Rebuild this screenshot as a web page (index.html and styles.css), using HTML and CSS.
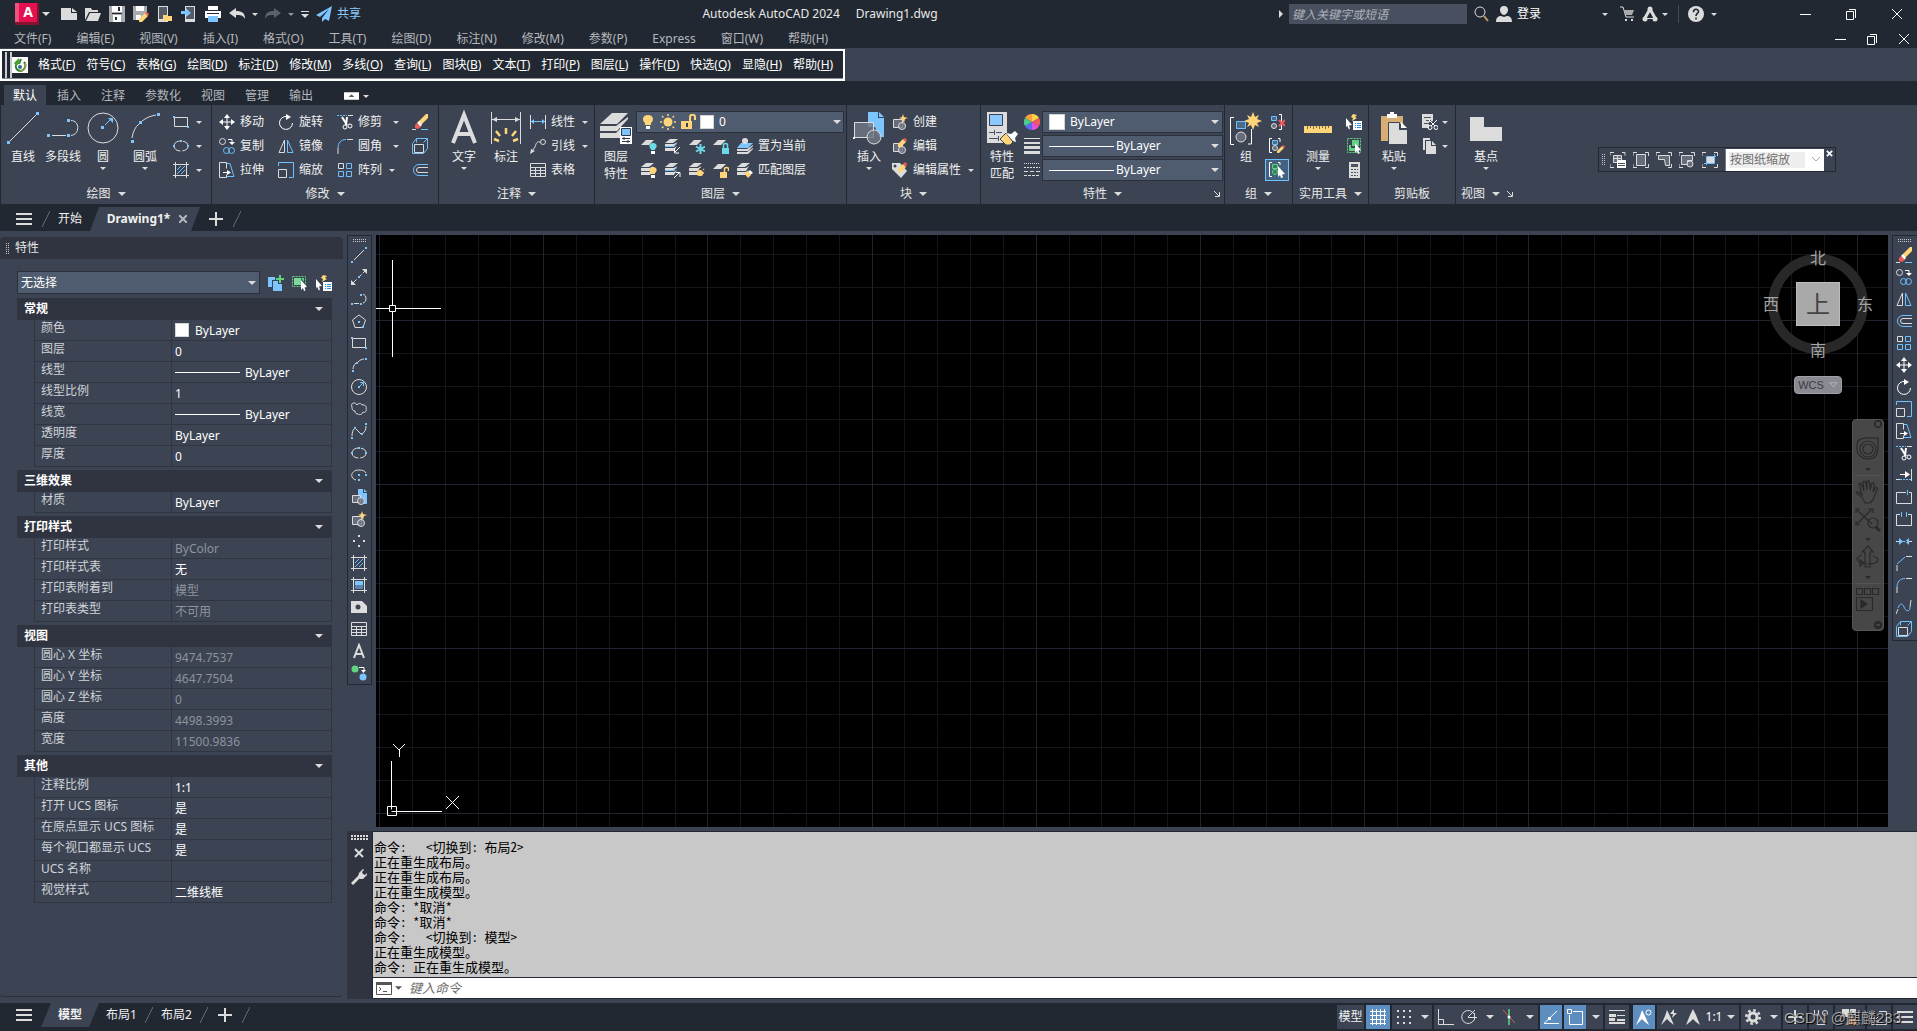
FILE: index.html
```html
<!DOCTYPE html>
<html lang="zh-CN">
<head>
<meta charset="utf-8">
<title>Autodesk AutoCAD 2024 - Drawing1.dwg</title>
<link rel="stylesheet" href="styles.css">
</head>
<body>

<svg class="sprite" aria-hidden="true">
  <symbol id="caret" viewBox="0 0 8 4"><path class="fg" d="M0 0h8L4 4z"/></symbol>
  <symbol id="new" viewBox="0 0 16 16"><path class="fg" d="M0 2h10v5h6v7H0z"/><path class="fg" d="M11 2l5 4h-5z"/></symbol>
  <symbol id="open" viewBox="0 0 16 16"><path class="fg" d="M0 2h6l1 2h6v2H4L0 14z"/><path class="fg" d="M5 7h11l-3 8H1z"/></symbol>
  <symbol id="save" viewBox="0 0 16 16"><path fill="#a9abae" d="M0 0h16v16H0z"/><path class="fw" d="M3 0h10v6H3zM4 9h8v7H4z"/><path fill="#222831" d="M3 7h10v1H3zM9 1h2v4H9zM6 11h2v3H6z"/></symbol>
  <symbol id="saveas" viewBox="0 0 16 16"><path fill="#a9abae" d="M0 0h14v11H0zM0 11h5v3H0z"/><path class="fw" d="M3 0h8v5H3z"/><path class="fw" d="M3 9h5v5H3z"/><path class="fy" d="M6 13l6-6 3 3-6 6H6z"/><path class="fr" d="M12 7l2-1 2 2-1 2z"/></symbol>
  <symbol id="webopen" viewBox="0 0 16 16"><path class="fg" d="M1 0h10v16H1z"/><path fill="#555b66" d="M2 1h8v12H2z"/><path class="fy" d="M6 9h4l1 1h4v5H6z"/></symbol>
  <symbol id="websave" viewBox="0 0 16 16"><path class="fg" d="M4 0h10v16H4z"/><path fill="#555b66" d="M5 1h8v12H5z"/><path class="fb" d="M0 5h5V2l5 5-5 4V8H0z"/></symbol>
  <symbol id="print" viewBox="0 0 16 16"><path class="fw" d="M3 0h10v4H3zM0 5h16v7H0z"/><path class="fb" d="M3 10h10v6H3z"/><path fill="#222831" d="M2 7h12v1H2z"/></symbol>
  <symbol id="undo" viewBox="0 0 16 16"><path class="fg" d="M0 7l7-5v3c6 0 9 2 9 8-2-4-5-4-9-4v3z"/></symbol>
  <symbol id="redo" viewBox="0 0 16 16"><path fill="#5c626c" d="M16 7L9 2v3c-6 0-9 2-9 8 2-4 5-4 9-4v3z"/></symbol>
  <symbol id="plane" viewBox="0 0 16 16"><path class="fb" d="M16 0L0 9l4 2 9-8-7 9v4l3-3 4 2z"/></symbol>
  <symbol id="mag" viewBox="0 0 16 16"><circle class="g" cx="7" cy="6" r="5"/><path stroke="#c99c63" stroke-width="2" d="M11 10l4 5"/></symbol>
  <symbol id="user" viewBox="0 0 16 16"><path class="fg" d="M8 0c3 0 4 2 4 4S10 9 8 9 4 6 4 4s1-4 4-4zM0 16c0-4 2-6 5-6l3 1 3-1c3 0 5 2 5 6z"/></symbol>
  <symbol id="cart" viewBox="0 0 16 16"><path class="g" d="M1 1h3l3 10h8"/><path fill="#a9abae" d="M5 4h10l-2 5H6z"/><path class="fg" d="M6 13h2v2H6zM12 13h2v2h-2z"/></symbol>
  <symbol id="adsk" viewBox="0 0 16 16"><path fill="none" stroke="#dcdcdc" stroke-width="3" d="M8 3L3 12M8 3l5 9"/><path class="g" d="M3 12.500h10"/><circle class="fg" cx="8" cy="3" r="2.500"/><circle class="fg" cx="3" cy="13" r="2.500"/><circle class="fg" cx="13" cy="13" r="2.500"/></symbol>
  <symbol id="help" viewBox="0 0 16 16"><circle class="fg" cx="8" cy="8" r="8"/><path fill="none" stroke="#222831" stroke-width="1.600" d="M5.500 6.200c0-4 5-3.500 5-.7C10.500 7.500 8 7.500 8 10M8 11.500v2"/></symbol>
  <symbol id="min" viewBox="0 0 12 12"><path class="w" d="M1 6.500h11"/></symbol>
  <symbol id="restore" viewBox="0 0 12 12"><path class="w" d="M1.500 3.500h7v8h-7zM4 1.500h6.500V10"/></symbol>
  <symbol id="close" viewBox="0 0 12 12"><path class="w" d="M1 1l10 10M11 1L1 11"/></symbol>
  <symbol id="bars" viewBox="0 0 16 14"><path class="g2" d="M0 2h16M0 7h16M0 12h16"/></symbol>
  <symbol id="plus" viewBox="0 0 14 14"><path class="g2" d="M7 0v14M0 7h14"/></symbol>

  <symbol id="move" viewBox="0 0 16 16"><path class="w" d="M8 2v12M2 8h12"/><path class="fw" d="M8 0l3 4H5zM8 16l-3-4h6zM0 8l4-3v6zM16 8l-4 3V5z"/></symbol>
  <symbol id="rotate" viewBox="0 0 16 16"><path class="w" d="M9 2.500a6.500 6.500 0 1 0 5.500 6.500"/><path class="fw" d="M8 0l5 3-5 3z"/></symbol>
  <symbol id="trim" viewBox="0 0 16 16"><path class="b" stroke-dasharray="2 1" d="M0 1.500h10"/><path class="g" d="M11 1.500h5"/><path class="w2" d="M5 3l5 8M10 3l-1 8"/><circle class="w" cx="8" cy="13" r="2"/><circle class="w" cx="13" cy="12" r="2"/></symbol>
  <symbol id="erase" viewBox="0 0 16 16"><path class="fy" d="M6 8l8-8h2v4l-7 7z"/><path class="fw" d="M5 9l2-2 3 4-2 2z"/><path class="fr" d="M5 9l4 4-3 2-3-1V11z"/><path class="g" d="M0 15.500h4"/><path class="b" d="M9 15.500h7"/></symbol>
  <symbol id="copy" viewBox="0 0 16 16"><circle class="g" cx="3.500" cy="3.500" r="3"/><path class="w" d="M9 1.500h4V5"/><path class="fw" d="M10 4h6l-3 3z"/><circle class="b" cx="7.500" cy="12.500" r="3"/><circle class="b" cx="12.500" cy="12.500" r="3"/></symbol>
  <symbol id="mirror" viewBox="0 0 16 16"><path class="g" d="M6.500 2v12.500H1z"/><path class="b" d="M9.500 2v12.500H15z"/></symbol>
  <symbol id="fillet" viewBox="0 0 16 16"><path class="b" d="M1 10C1 5 4 1.500 9 1.500"/><path class="g" d="M10 1.500h6M1 10v6"/></symbol>
  <symbol id="chamfer" viewBox="0 0 16 16"><path class="b" d="M1 9l8-7"/><path class="g" d="M10 1.500h6M1 10v6"/></symbol>
  <symbol id="box" viewBox="0 0 16 16"><path class="b" d="M.5 5.500l4-5h11v10l-4 5H.5zM4.500.5v4M15.500.5l-4 4"/><path class="g" d="M2.500 6.500h9v8h-9z"/></symbol>
  <symbol id="stretch" viewBox="0 0 16 16"><path class="g" d="M.5.5h7v6M.5.5v15h7v-3"/><path class="b" d="M8 1.500h3l4 13H8"/><path class="w" d="M4 10.500h7"/><path class="fw" d="M8 8l4 2.500L8 13z"/></symbol>
  <symbol id="scale" viewBox="0 0 16 16"><path class="b" d="M.5 4V.5h15v15H11"/><path class="g" d="M.5 7.500h8v8h-8z"/></symbol>
  <symbol id="array" viewBox="0 0 16 16"><path class="g" d="M1.500 1.500h5v5h-5z"/><path class="b" d="M9.500 1.500h5v5h-5zM1.500 9.500h5v5h-5zM9.500 9.500h5v5h-5z"/></symbol>
  <symbol id="offset" viewBox="0 0 16 16"><path class="b" d="M16 2.500H7a5.500 5.500 0 0 0 0 11h9"/><path class="g" d="M16 5.500H7a2.500 2.500 0 0 0 0 5h9"/></symbol>
  <symbol id="rect" viewBox="0 0 16 16"><path class="g" d="M1.500 3.500h13v9h-13z"/><path class="fb" d="M0 2h2v2H0zM14 12h2v2h-2z"/></symbol>
  <symbol id="ellipse" viewBox="0 0 16 16"><ellipse class="g" cx="8" cy="8" rx="7" ry="5" stroke-dasharray="8 2"/><path class="fb" d="M0 7h2v2H0zM14 7h2v2h-2zM7 2h2v2H7z"/></symbol>
  <symbol id="hatch" viewBox="0 0 16 16"><path class="g" d="M2.500 0v16M13.500 0v16M0 2.500h16M0 13.500h16"/><path class="b" d="M4 8l4-4M4 12l8-8M8 12l4-4"/></symbol>
  <symbol id="gradient" viewBox="0 0 16 16"><path class="fb" d="M4 4h8v4H4z"/><path fill="#5a84ad" d="M4 8h8v4H4z"/><path class="g" d="M2.500 0v16M13.500 0v16M0 2.500h16M0 13.500h16"/></symbol>
  <symbol id="line" viewBox="0 0 16 16"><path class="g" d="M3 13L13 3"/><path class="fb" d="M0 14h2v2H0zM14 0h2v2h-2z"/></symbol>
  <symbol id="xline" viewBox="0 0 16 16"><path class="g" stroke-dasharray="5 2" d="M2 14L14 2"/><path class="fg" d="M0 16v-5l5 5zM16 0v5l-5-5z"/><path class="fb" d="M7 7h2v2H7z"/></symbol>
  <symbol id="pline" viewBox="0 0 16 16"><path class="g" d="M3 12.500h5M12 3.500c4 0 4 8 0 8.500"/><path class="fb" d="M0 12h2v2H0zM9 12h2v2H9zM9 3h2v2H9z"/></symbol>
  <symbol id="polygon" viewBox="0 0 16 16"><path class="g" d="M8 2l6.500 5-2.500 7.500H4L1.500 7z"/><path class="fb" d="M7 8h2v2H7zM11 13h2v2h-2z"/></symbol>
  <symbol id="arc" viewBox="0 0 16 16"><path class="g" d="M2 12c0-2 1-4 3-6M7 5c2-2 4-3 6-3"/><path class="fb" d="M1 13h2v2H1zM5 5h2v2H5zM14 1h2v2h-2z"/></symbol>
  <symbol id="circle" viewBox="0 0 16 16"><circle class="g" cx="8" cy="8" r="7.500"/><path class="b" d="M8 8l4-4M9 3.500h3.500V7"/><path class="fb" d="M7 7h2v2H7z"/></symbol>
  <symbol id="cloud" viewBox="0 0 16 16"><path class="g" d="M1 6c-2-5 4-5 5-2 2-3 5-1 5 0 3-1 5 2 4 4 1 2-1 4-3 3-1 3-4 3-5 2-2 0-3-1-3-3-3 0-3-3-3-4z"/></symbol>
  <symbol id="spline" viewBox="0 0 16 16"><path class="g" d="M1 13c0-3 1-6 2-7M5 6l5 5M12 10c2-1 3-4 3-7"/><path class="fb" d="M0 14h2v2H0zM3 4h2v2H3zM10 10h2v2h-2zM14 0h2v2h-2z"/></symbol>
  <symbol id="earc" viewBox="0 0 16 16"><path class="g" d="M5 13C-2 11 0 3 8 3c4 0 6 1 7 3"/><path class="fb" d="M14 7h2v2h-2zM7 7h2v2H7zM7 12h2v2H7z"/></symbol>
  <symbol id="insert" viewBox="0 0 16 16"><path class="fb" d="M7 0h5v4h4v11h-4l-2-5H7z"/><path class="fb" d="M13 0l3 3h-3z"/><path class="gs" d="M1.500 6.500h8v7h-8z"/><circle class="gs" cx="10" cy="12" r="3.500"/></symbol>
  <symbol id="mkblock" viewBox="0 0 16 16"><path class="gs" d="M1.500 5.500h9v8h-9z"/><circle class="gs" cx="10" cy="12" r="3.500"/><path class="fy" d="M11 0l1 3 4 1-3 1-1 4-2-4-3-1 3-1z"/></symbol>
  <symbol id="edblock" viewBox="0 0 16 16"><path class="gs" d="M1.500 5.500h9v8h-9z"/><circle class="gs" cx="10" cy="12" r="3.500"/><path class="fy" d="M6 9V6l5-5 3 3-5 5z"/><path class="fr" d="M11 1l2-1 2 2-1 2z"/></symbol>
  <symbol id="attr" viewBox="0 0 16 16"><path class="fg" d="M0 1h8l7 8-6 7-9-9z"/><circle cx="3" cy="4" r="1.500" fill="#3c4453"/><path class="fy" d="M6 10V7l5-5 3 3-5 5z"/><path class="fr" d="M11 2l2-2 2 2-1 3z"/></symbol>
  <symbol id="points" viewBox="0 0 16 16"><path class="fg" d="M7 2h2v2H7zM2 7h2v2H2zM12 7h2v2h-2zM7 12h2v2H7z"/></symbol>
  <symbol id="region" viewBox="0 0 16 16"><path class="fg" d="M0 2h11l5 5v7H0z"/><circle cx="7" cy="8" r="2.500" fill="#3c4453"/></symbol>
  <symbol id="table" viewBox="0 0 16 16"><path class="g" d="M.5 1.500h15v13H.5zM0 5.500h16M0 8.500h16M0 11.500h16M5.500 5v9M10.500 5v9"/></symbol>
  <symbol id="addsel" viewBox="0 0 16 16"><circle cx="4" cy="4" r="3.500" fill="#5fd381"/><circle class="fb" cx="12" cy="12" r="3.500"/><path class="w" d="M8 2.500h5V6"/><path class="fw" d="M10 5h5l-2.500 3z"/></symbol>
  <symbol id="extend" viewBox="0 0 16 16"><path class="g" d="M15.500 2v12M0 12.500h4"/><path class="b" stroke-dasharray="2 1" d="M4 12.500h11"/><path class="w" d="M4 7.500h6"/><path class="fw" d="M9 4l5 3.500L9 11z"/></symbol>
  <symbol id="breakp" viewBox="0 0 16 16"><path class="g" d="M10 3.500H.5v11h15v-11H13"/><path class="b" d="M11.500 1v5"/></symbol>
  <symbol id="break" viewBox="0 0 16 16"><path class="g" d="M4 3.500H.5v11h15v-11H12"/><path class="b" d="M5.500 1v5M10.500 1v5"/></symbol>
  <symbol id="join" viewBox="0 0 16 16"><path class="g" d="M0 8.500h5M11 8.500h5"/><path class="fb" d="M3 5l4 3.500L3 12zM13 5L9 8.500l4 3.500zM5 8h6v1H5z"/></symbol>
  <symbol id="blend" viewBox="0 0 16 16"><path class="b" d="M2 9c2-6 5-4 6-1 2 5 6 5 6 0"/><path class="g" d="M0 15l2-5M15 1l-1 7"/></symbol>
  <symbol id="dimlin" viewBox="0 0 16 16"><path class="g" d="M.5 1v14M15.500 1v14"/><path class="b" d="M1 7.500h14"/><path class="fb" d="M1 7.500L4 5v5zM15 7.500L12 5v5z"/></symbol>
  <symbol id="leader" viewBox="0 0 16 16"><circle class="g" cx="13" cy="4" r="2.500"/><path class="g" d="M10 4C6 3 6 7 5 9l-3 4"/><path class="fg" d="M0 16l1-5 4 2z"/></symbol>

  <symbol id="sheet" viewBox="0 0 16 16"><path class="fg" d="M5 2h8L8 7H0z"/></symbol>
  <symbol id="sheets" viewBox="0 0 16 16"><path class="fg" d="M5 1h8L8 5H0zM0 6h9l3-2-3 5H0zM0 10h9l3-2-3 5H0z"/></symbol>
  <symbol id="lay-off" viewBox="0 0 16 16"><use href="#sheet"/><path fill="#6dd9e8" d="M12 5c5 0 4 5 2 6v1h-4v-1c-2-1-3-6 2-6z"/><path class="fw" d="M10 13h4v3h-4z"/></symbol>
  <symbol id="lay-iso" viewBox="0 0 16 16"><use href="#sheets"/><path class="b" d="M0 8.500h8l4-3"/><path class="w" d="M15 9l-5 5M9.500 10v5H14"/></symbol>
  <symbol id="lay-frz" viewBox="0 0 16 16"><use href="#sheet"/><path stroke="#6dd9e8" stroke-width="2" d="M11.500 6v10M7 8.500l9 5M7 13.500l9-5"/></symbol>
  <symbol id="lay-lock" viewBox="0 0 16 16"><use href="#sheet"/><path fill="#6dd9e8" d="M9 10h7v6H9z"/><path fill="none" stroke="#6dd9e8" stroke-width="1.500" d="M10.500 10V7c0-2 4-2 4 0v3"/></symbol>
  <symbol id="lay-cur" viewBox="0 0 16 16"><path class="fb" d="M4 5h12l-5 5H0z"/><path class="fg" d="M0 11h10l6-4v1l-5 5H0zM0 14h10l6-4v1l-5 5H0z"/><circle class="fg" cx="8" cy="3" r="3"/></symbol>
  <symbol id="lay-on" viewBox="0 0 16 16"><use href="#sheets"/><path class="fy" d="M12 5c5 0 4 5 2 6v1h-4v-1c-2-1-3-6 2-6z"/><path class="fw" d="M10 13h4v3h-4z"/></symbol>
  <symbol id="lay-uniso" viewBox="0 0 16 16"><use href="#sheets"/><path class="b" d="M0 8.500h8l4-3"/><path class="w" d="M9 16l5-5M11 10.500h4V15"/></symbol>
  <symbol id="lay-thaw" viewBox="0 0 16 16"><use href="#sheets"/><circle class="fy" cx="11" cy="11" r="3"/><path stroke="#ffd57a" stroke-dasharray="1 3" stroke-width="1.500" d="M11 5v11M6 11h10M7 7l8 8M15 7l-8 8"/></symbol>
  <symbol id="lay-unlock" viewBox="0 0 16 16"><use href="#sheet"/><path class="fy" d="M7 10h7v6H7z"/><path fill="none" stroke="#ffd57a" stroke-width="1.500" d="M11.500 10V7c0-2 4-2 4 0v2"/></symbol>
  <symbol id="lay-match" viewBox="0 0 16 16"><use href="#sheets"/><path class="fw" d="M13 8l3 3-3 2-2-3z"/><path class="fy" d="M7 11l4-2 3 4-3 3z"/></symbol>
  <symbol id="bulb" viewBox="0 0 16 16"><path class="fy" d="M8 1c6 0 6 6 3 8v2H5V9C2 7 2 1 8 1z"/><path class="fw" d="M6 12h4v3H6z"/></symbol>
  <symbol id="sun" viewBox="0 0 16 16"><circle class="fy" cx="8" cy="8" r="4.500"/><path stroke="#ffd57a" stroke-width="1.500" stroke-dasharray="2 12" d="M8 0v16M0 8h16"/><path stroke="#ffd57a" stroke-width="1.500" stroke-dasharray="2 13" d="M2 2l12 12M14 2L2 14"/></symbol>
  <symbol id="unlock" viewBox="0 0 16 16"><path class="fy" d="M1 7h11v8H1z"/><path fill="none" stroke="#ffd57a" stroke-width="2" d="M10 7V3c0-3 5-3 5 0v3"/><path fill="#3c4453" d="M6 9h2v4H6z"/></symbol>
  <symbol id="wheel" viewBox="0 0 16 16"><path fill="#ff9d3c" d="M8 8V0a8 8 0 0 0-7 4z"/><path fill="#ffd24a" d="M8 8V0a8 8 0 0 1 7 4z"/><path fill="#f25b5b" d="M8 8l7-4a8 8 0 0 1 0 8z"/><path fill="#e94bd2" d="M8 8l7 4a8 8 0 0 1-7 4z"/><path fill="#5a6cf0" d="M8 8v8a8 8 0 0 1-7-4z"/><path fill="#4fc98a" d="M8 8l-7 4a8 8 0 0 1 0-8z"/></symbol>
  <symbol id="lweight" viewBox="0 0 16 16"><path class="fg" d="M0 0h16v1H0zM0 4h16v2H0zM0 8h16v3H0zM0 13h16v3H0z"/></symbol>
  <symbol id="ltype" viewBox="0 0 16 16"><path class="g" stroke-dasharray="1 1" d="M0 1.500h16"/><path class="g" stroke-dasharray="2 1" d="M0 5.500h16"/><path class="g" stroke-dasharray="4 2" d="M0 9.500h16"/><path class="g" stroke-dasharray="3 1" d="M0 13.500h16"/></symbol>
  <symbol id="ungroup" viewBox="0 0 16 16"><path class="w" d="M10 .5h2.500v15H10"/><path class="bs" d="M2.500 2.500h5v4h-5z"/><circle class="gs" cx="5" cy="12" r="2.500"/><path stroke="#f05a5a" stroke-width="2" d="M10 6l6 6M16 6l-6 6"/></symbol>
  <symbol id="grpedit" viewBox="0 0 16 16"><path class="w" d="M3 .5H.5v14H3M9 .5h2V4"/><path class="bs" d="M3.500 2.500h5v4h-5z"/><circle class="gs" cx="6" cy="10" r="2.500"/><path class="fy" d="M8 13l5-5 2 2-5 5H8z"/><path class="fr" d="M13 8l2-1 1 2-1 1z"/></symbol>
  <symbol id="grpsel" viewBox="0 0 16 16"><path class="w" d="M3 .5H.5v14H3M9 .5h2V3"/><path fill="#3d7a5a" stroke="#5fd381" d="M3.500 2.500h5v4h-5z"/><circle cx="6" cy="10" r="2.500" fill="#3d7a5a" stroke="#5fd381"/><path class="fw" d="M9 4l7 8-3 .5 1 3-2 .5-1-3-2 2z"/></symbol>
  <symbol id="qselect" viewBox="0 0 16 16"><path class="fw" d="M0 4l6 7-3 .5 1 3-1 1-2-4-1 2z"/><path class="fy" d="M7 0l4 1-2 2 2 1-5 3 1-3-2-1z"/><path class="fw" d="M7 7h9v9H7z"/><path stroke="#2d8de0" d="M9 9.500h1M11 9.500h4M9 11.500h1M11 11.500h4M9 13.500h1M11 13.500h4"/></symbol>
  <symbol id="selall" viewBox="0 0 16 16"><path fill="none" stroke="#5fd381" stroke-dasharray="2 1" d="M.5 1.500h13v10H.5z"/><path fill="#7fd89b" d="M2 3h7v7H2z"/><path fill="#5fd381" d="M9 3h3v4z"/><path class="fw" d="M9 5l6 7-2.500.5 1 3L12 16l-1-3-2 2z"/></symbol>
  <symbol id="selsim" viewBox="0 0 16 16"><path fill="none" stroke="#5fd381" stroke-dasharray="2 1" d="M1.500.5h13v14h-13z"/><path fill="#5fd381" d="M6 2h7v6H6zM3 7h2v3h5v3H3z"/><path class="fw" d="M9 5l6 7-2.500.5 1 3L12 16l-1-3-2 2z"/></symbol>
  <symbol id="calc" viewBox="0 0 16 16"><path class="fg" d="M3 0h11v16H3z"/><path fill="#4b5261" d="M5 2h7v3H5zM5 7h2v1H5zM8 7h2v1H8zM11 7h1v1h-1zM5 10h2v1H5zM8 10h2v1H8zM11 10h1v1h-1zM5 13h2v1H5zM8 13h2v1H8zM11 13h1v1h-1z"/></symbol>
  <symbol id="cut" viewBox="0 0 16 16"><path class="fg" d="M0 0h11v7l-4 1v6H0z"/><path stroke="#4b5261" d="M2 3.500h7M4 6.500h5M2 9.500h5"/><path class="w" d="M6 5l7 7M15 6l-6 6"/><circle class="w" cx="8" cy="13.500" r="2"/><circle class="w" cx="14" cy="13.500" r="2"/></symbol>
  <symbol id="copyclip" viewBox="0 0 16 16"><path class="fg" d="M1 0h7v2H3v10H1z"/><path class="fg" d="M4 3h5v5h5v8H4z"/><path class="fg" d="M10 3l4 4h-4z"/></symbol>
  <symbol id="addobj" viewBox="0 0 16 16"><path class="fb" d="M0 2h7v3H4v7H0z"/><path class="fb" d="M5 6h9v10H5z"/><path stroke="#3c4453" stroke-width="4" d="M12 0v9M8 4h8"/><path stroke="#5fd381" stroke-width="2" d="M12 0v8M8 4h8"/></symbol>
  <symbol id="vp-dlg" viewBox="0 0 16 16"><path class="g" d="M0 3.500V.5h4M12 .5h3v3M0 12v3.500h4"/><path class="gs" d="M3.500 3.500h8v7h-8zM3 6.500h9M7.500 3v6"/><path class="fw" d="M7 8h9v8H7z"/><path stroke="#4b5261" d="M8 11.500h7M8 13.500h7"/></symbol>
  <symbol id="vp-one" viewBox="0 0 16 16"><path class="g" d="M0 4V.5h4M12 .5h3.500V4M0 12v3.500h4M12 15.500h3.500V12"/><path class="gs" d="M3.500 2.500h9v11h-9z"/></symbol>
  <symbol id="vp-poly" viewBox="0 0 16 16"><path class="g" d="M0 4V.5h4M12 .5h3.500V4M12 15.500h3.500V12"/><path class="gs" d="M2.500 3.500h11v10h-4l-1-6h-6z"/></symbol>
  <symbol id="vp-obj" viewBox="0 0 16 16"><path class="g" d="M0 4V.5h4M12 .5h3.500V4M0 12v3.500h4"/><path class="gs" d="M2.500 3.500h11v5h-5v4h-6z"/><circle class="gs" cx="11" cy="12" r="3"/></symbol>
  <symbol id="vp-clip" viewBox="0 0 16 16"><path class="g" d="M0 4V.5h4M12 .5h3.500V4M0 12v3.500h4M12 15.500h3.500V12"/><path class="fg" d="M5 5h7v6H5z"/><path class="b" d="M4.500 13V4.500H14M12.500 2v9.500H2"/></symbol>

  <symbol id="s-grid" viewBox="0 0 16 16"><path class="w" d="M2.500 0v16M6.500 0v16M10.500 0v16M14.500 0v16M0 2.500h16M0 6.500h16M0 10.500h16M0 14.500h16"/></symbol>
  <symbol id="s-snap" viewBox="0 0 16 16"><path class="g2" stroke-dasharray="2 4" d="M1 2h14M1 8h14M1 14h14"/></symbol>
  <symbol id="s-ortho" viewBox="0 0 16 16"><path class="g" d="M.5 0v15.500H16M.5 10.500h5v5"/></symbol>
  <symbol id="s-polar" viewBox="0 0 16 16"><path class="g" d="M13 5a6.500 6.500 0 1 0 0 6M7 8.500h9M7 8l7-7M13.500 4v7"/></symbol>
  <symbol id="s-iso" viewBox="0 0 16 16"><path stroke="#e05a5a" d="M2 1l12 13"/><path stroke="#5fd381" stroke-width="1.500" d="M8 0v16"/><circle class="fw" cx="8" cy="8" r="1.500"/></symbol>
  <symbol id="s-track" viewBox="0 0 16 16"><path class="w" d="M14 2L1 14.500h15"/><path class="fw" d="M5 8h3v3H5z"/></symbol>
  <symbol id="s-osnap" viewBox="0 0 16 16"><path class="w" d="M.5.500h4v4h-4zM6 2.500h9.500v13h-13V6"/></symbol>
  <symbol id="s-lw" viewBox="0 0 16 16"><path class="fg" d="M0 1h16v1H0zM0 5h7v3H0zM8 6h8v1H8zM0 9h6v3H0zM8 10h8v2H8zM0 13h16v2H0z"/></symbol>
  <symbol id="s-ann" viewBox="0 0 16 16"><path class="fg" d="M8 0l3 6 4 10-4-3-3-3-3 3-4 3L5 6z"/></symbol>
  <symbol id="s-annv" viewBox="0 0 16 16"><path class="fw" d="M6 1l3 6 4 9-4-3-3-3-3 3-3 3 4-9z"/><circle class="w" cx="12.500" cy="3.500" r="2.500"/></symbol>
  <symbol id="s-anna" viewBox="0 0 16 16"><path class="fg" d="M6 1l3 6 4 9-4-3-3-3-3 3-3 3 4-9z"/><path class="fg" d="M13 0l-4 5h3l-1 4 5-5h-3z"/></symbol>
  <symbol id="s-gear" viewBox="0 0 16 16"><circle cx="8" cy="8" r="4" fill="none" stroke="#dcdcdc" stroke-width="3"/><circle cx="8" cy="8" r="6.700" fill="none" stroke="#dcdcdc" stroke-width="2.600" stroke-dasharray="2.630 2.630"/></symbol>
  <symbol id="s-unit" viewBox="0 0 16 16"><path class="g" d="M1.500 1v5h4V1M8 9l4 6.500H4z"/><circle class="g" cx="12" cy="4" r="2.500"/></symbol>
  <symbol id="s-warn" viewBox="0 0 16 16"><path class="fg" d="M0 0h7v8H0zM8 0h6v6H8z"/><path fill="#f3a873" d="M10 5l6 11H4z"/><path class="w" d="M10 9v4M10 14v1"/></symbol>
  <symbol id="s-clean" viewBox="0 0 16 16"><path class="g" d="M.5 6v9.500h15v-13H8M8 7l-4 4M3.500 8v4H8"/></symbol>
</svg>

<header class="titlebar">
  <div class="quick">
    <button class="logo" aria-label="应用程序菜单"><span class="logo-face">A</span></button>
    <svg class="caret gap-l"><use href="#caret"/></svg>
    <div class="quick-icons">
      <button aria-label="新建"><svg class="i16"><use href="#new"/></svg></button>
      <button aria-label="打开"><svg class="i16"><use href="#open"/></svg></button>
      <button aria-label="保存"><svg class="i16"><use href="#save"/></svg></button>
      <button aria-label="另存为"><svg class="i16"><use href="#saveas"/></svg></button>
      <button aria-label="从 Web 打开"><svg class="i16"><use href="#webopen"/></svg></button>
      <button aria-label="保存到 Web"><svg class="i16"><use href="#websave"/></svg></button>
      <button aria-label="打印"><svg class="i16"><use href="#print"/></svg></button>
      <button aria-label="放弃"><svg class="i16"><use href="#undo"/></svg></button>
    </div>
    <svg class="caret small"><use href="#caret"/></svg>
    <button class="redo" aria-label="重做"><svg class="i16"><use href="#redo"/></svg></button>
    <svg class="caret small dim"><use href="#caret"/></svg>
    <button class="custom" aria-label="自定义"><svg viewBox="0 0 8 7"><path class="fg" d="M0 0h8v1H0zM0 3h8L4 7z"/></svg></button>
    <button class="share"><svg class="i16"><use href="#plane"/></svg>共享</button>
  </div>
  <h1 class="title"><span>Autodesk AutoCAD 2024</span><span>Drawing1.dwg</span></h1>
  <div class="account">
    <svg class="play" viewBox="0 0 4 8"><path class="fg" d="M0 0l4 4-4 4z"/></svg>
    <input class="search" type="text" placeholder="键入关键字或短语" aria-label="搜索">
    <button aria-label="搜索"><svg class="i16"><use href="#mag"/></svg></button>
    <button class="login"><svg class="i16"><use href="#user"/></svg>登录</button>
    <svg class="caret small login-caret"><use href="#caret"/></svg>
    <button aria-label="商店"><svg class="i16"><use href="#cart"/></svg></button>
    <button class="store2" aria-label="Autodesk"><svg class="i16"><use href="#adsk"/></svg><svg class="caret small"><use href="#caret"/></svg></button>
    <span class="vsep"></span>
    <button class="helpbtn" aria-label="帮助"><svg class="i16"><use href="#help"/></svg><svg class="caret small"><use href="#caret"/></svg></button>
    <div class="winctl">
      <button aria-label="最小化"><svg class="i12"><use href="#min"/></svg></button>
      <button aria-label="还原"><svg class="i12"><use href="#restore"/></svg></button>
      <button aria-label="关闭"><svg class="i12"><use href="#close"/></svg></button>
    </div>
  </div>
</header>

<nav class="menubar">
  <div class="menus">
    <button>文件(F)</button><button>编辑(E)</button><button>视图(V)</button><button>插入(I)</button><button>格式(O)</button><button>工具(T)</button><button>绘图(D)</button><button>标注(N)</button><button>修改(M)</button><button>参数(P)</button><button>Express</button><button>窗口(W)</button><button>帮助(H)</button>
  </div>
  <div class="docctl">
    <button aria-label="最小化文档"><svg class="i12"><use href="#min"/></svg></button>
    <button aria-label="还原文档"><svg class="i12"><use href="#restore"/></svg></button>
    <button aria-label="关闭文档"><svg class="i12"><use href="#close"/></svg></button>
  </div>
</nav>

<div class="plugin-row">
  <nav class="plugin">
    <span class="bar-grip"></span>
    <svg class="plugin-logo" viewBox="0 0 16 16"><path fill="#fff" d="M0 0h16v16H0z"/><path fill="none" stroke="#2f7d32" stroke-width="2" d="M9 2L7 7M12 5c3 3 1 8-3 9-4 0-6-3-5-6"/><path fill="#46a02f" d="M2 6l5-5 1 5-4 3z"/><path fill="none" stroke="#d9b23c" d="M13 6c2 5-2 8-5 8"/><circle cx="8" cy="10" r="2" fill="#2f6f86"/></svg>
    <div class="plugin-menus">
      <button>格式(<u>F</u>)</button><button>符号(<u>C</u>)</button><button>表格(<u>G</u>)</button><button>绘图(<u>D</u>)</button><button>标注(<u>D</u>)</button><button>修改(<u>M</u>)</button><button>多线(<u>O</u>)</button><button>查询(<u>L</u>)</button><button>图块(<u>B</u>)</button><button>文本(<u>T</u>)</button><button>打印(<u>P</u>)</button><button>图层(<u>L</u>)</button><button>操作(<u>D</u>)</button><button>快选(<u>Q</u>)</button><button>显隐(<u>H</u>)</button><button>帮助(<u>H</u>)</button>
    </div>
  </nav>
</div>

<nav class="ribbon-tabs">
  <button class="active">默认</button><button>插入</button><button>注释</button><button>参数化</button><button>视图</button><button>管理</button><button>输出</button>
  <button class="collapse" aria-label="最小化功能区"><svg viewBox="0 0 16 8"><path class="fw" d="M0 0h16v8H0z"/><path fill="#555b66" d="M5 5h6L8 2z"/></svg><svg class="caret small"><use href="#caret"/></svg></button>
</nav>

<section class="ribbon">
  <div class="panel">
    <div class="panel-body draw">
      <button class="big w38"><svg class="i32" viewBox="0 0 32 32"><path class="g" d="M2 30L30 2"/><path class="fb" d="M0 29h3v3H0zM29 0h3v3h-3z"/></svg><span>直线</span></button>
      <button class="big w42"><svg class="i32" viewBox="0 0 32 32"><path class="g" d="M5 23.500h14M24 8.500c9 0 9 14 0 15"/><path class="fb" d="M0 22h3v3H0zM20 22h3v3h-3zM20 7h3v3h-3z"/></svg><span>多段线</span></button>
      <button class="big w38"><svg class="i32" viewBox="0 0 32 32"><circle class="g" cx="16" cy="16" r="15"/><path class="b" d="M18 13l6-6"/><path class="fb" d="M26 6v5l-5-5zM14 14h3v3h-3z"/></svg><span>圆</span><svg class="caret small"><use href="#caret"/></svg></button>
      <button class="big w46"><svg class="i32" viewBox="0 0 32 32"><path class="g" d="M3 26C4 20 6 15 10 12M13 9c4-3 8-5 14-6"/><path class="fb" d="M2 28h3v3H2zM10 9h3v3h-3zM28 1h3v3h-3z"/></svg><span>圆弧</span><svg class="caret small"><use href="#caret"/></svg></button>
      <div class="stack draw-small">
        <button class="cmd" aria-label="矩形"><svg class="i16"><use href="#rect"/></svg><svg class="caret small"><use href="#caret"/></svg></button>
        <button class="cmd" aria-label="椭圆"><svg class="i16"><use href="#ellipse"/></svg><svg class="caret small"><use href="#caret"/></svg></button>
        <button class="cmd" aria-label="图案填充"><svg class="i16"><use href="#hatch"/></svg><svg class="caret small"><use href="#caret"/></svg></button>
      </div>
    </div>
    <button class="panel-title">绘图<svg class="caret"><use href="#caret"/></svg></button>
  </div>

  <div class="panel">
    <div class="panel-body modify">
      <button class="cmd"><svg class="i16"><use href="#move"/></svg>移动</button>
      <button class="cmd"><svg class="i16"><use href="#rotate"/></svg>旋转</button>
      <button class="cmd"><svg class="i16"><use href="#trim"/></svg>修剪<svg class="caret small far"><use href="#caret"/></svg></button>
      <button class="cmd" aria-label="删除"><svg class="i16"><use href="#erase"/></svg></button>
      <button class="cmd"><svg class="i16"><use href="#copy"/></svg>复制</button>
      <button class="cmd"><svg class="i16"><use href="#mirror"/></svg>镜像</button>
      <button class="cmd"><svg class="i16"><use href="#fillet"/></svg>圆角<svg class="caret small far"><use href="#caret"/></svg></button>
      <button class="cmd" aria-label="分解"><svg class="i16"><use href="#box"/></svg></button>
      <button class="cmd"><svg class="i16"><use href="#stretch"/></svg>拉伸</button>
      <button class="cmd"><svg class="i16"><use href="#scale"/></svg>缩放</button>
      <button class="cmd"><svg class="i16"><use href="#array"/></svg>阵列<svg class="caret small"><use href="#caret"/></svg></button>
      <button class="cmd" aria-label="偏移"><svg class="i16"><use href="#offset"/></svg></button>
    </div>
    <button class="panel-title">修改<svg class="caret"><use href="#caret"/></svg></button>
  </div>

  <div class="panel">
    <div class="panel-body annotate">
      <button class="big w42"><svg class="i32" viewBox="0 0 32 32"><path fill="none" stroke="#dcdcdc" stroke-width="4" d="M5 31L16 3l11 28M9 22h14"/></svg><span>文字</span><svg class="caret small"><use href="#caret"/></svg></button>
      <button class="big w42"><svg class="i32" viewBox="0 0 32 32"><path class="g" d="M1.500 0v32M30.500 0v32M2 7.500h28"/><path class="fg" d="M2 7.500L7 5v5zM30 7.500L25 5v5z"/><path stroke="#ffd57a" stroke-width="2.500" d="M16 22v-6M10 24l-4-5M22 24l4-5M9 29l-5-2M23 29l5-2"/></svg><span>标注</span></button>
      <div class="stack">
        <button class="cmd"><svg class="i16"><use href="#dimlin"/></svg>线性<svg class="caret small"><use href="#caret"/></svg></button>
        <button class="cmd"><svg class="i16"><use href="#leader"/></svg>引线<svg class="caret small"><use href="#caret"/></svg></button>
        <button class="cmd"><svg class="i16"><use href="#table"/></svg>表格</button>
      </div>
    </div>
    <button class="panel-title">注释<svg class="caret"><use href="#caret"/></svg></button>
  </div>

  <div class="panel">
    <div class="panel-body layers">
      <button class="big w40"><svg class="i32" viewBox="0 0 32 32"><path class="fg" d="M12 1h16L17 12H0zM0 14h16l12-9v2L17 19H0zM0 21h16l4-4v9H0z"/><path class="fw" d="M20 15h12v17H20z"/><path class="fb" stroke="#333a46" d="M21.500 16.500h9v7h-9z"/><path stroke="#333a46" d="M22 26.500h8M24 25v3M22 29.500h8M28 28v3"/></svg><span>图层<br>特性</span></button>
      <div class="layer-tools">
        <div class="combo layer-combo">
          <svg class="i16"><use href="#bulb"/></svg><svg class="i16"><use href="#sun"/></svg><svg class="i16"><use href="#unlock"/></svg><span class="swatch"></span>
          <select aria-label="图层"><option>0</option></select><svg class="caret"><use href="#caret"/></svg>
        </div>
        <div class="layer-row">
          <button aria-label="关"><svg class="i16"><use href="#lay-off"/></svg></button><button aria-label="隔离"><svg class="i16"><use href="#lay-iso"/></svg></button><button aria-label="冻结"><svg class="i16"><use href="#lay-frz"/></svg></button><button aria-label="锁定"><svg class="i16"><use href="#lay-lock"/></svg></button>
          <button class="cmd"><svg class="i16"><use href="#lay-cur"/></svg>置为当前</button>
        </div>
        <div class="layer-row">
          <button aria-label="开"><svg class="i16"><use href="#lay-on"/></svg></button><button aria-label="取消隔离"><svg class="i16"><use href="#lay-uniso"/></svg></button><button aria-label="解冻"><svg class="i16"><use href="#lay-thaw"/></svg></button><button aria-label="解锁"><svg class="i16"><use href="#lay-unlock"/></svg></button>
          <button class="cmd"><svg class="i16"><use href="#lay-match"/></svg>匹配图层</button>
        </div>
      </div>
    </div>
    <button class="panel-title">图层<svg class="caret"><use href="#caret"/></svg></button>
  </div>

  <div class="panel">
    <div class="panel-body block">
      <button class="big w42"><svg class="i32" viewBox="0 0 32 32"><path class="fb" d="M15 0h10v6h6v19h-5l-4-10h-7z"/><path class="fb" d="M26 0l5 5h-5z"/><path class="gs" d="M1.500 10.500h19v15h-19z"/><circle class="gs" cx="21" cy="25" r="7"/><path class="fw" d="M0 25h2v2H0z"/></svg><span>插入</span><svg class="caret small"><use href="#caret"/></svg></button>
      <div class="stack">
        <button class="cmd"><svg class="i16"><use href="#mkblock"/></svg>创建</button>
        <button class="cmd"><svg class="i16"><use href="#edblock"/></svg>编辑</button>
        <button class="cmd"><svg class="i16"><use href="#attr"/></svg>编辑属性<svg class="caret small"><use href="#caret"/></svg></button>
      </div>
    </div>
    <button class="panel-title">块<svg class="caret"><use href="#caret"/></svg></button>
  </div>

  <div class="panel">
    <div class="panel-body props">
      <button class="big w38"><svg class="i32" viewBox="0 0 32 32"><path class="fg" d="M1 0h20v31H1z"/><path fill="#8cc8ff" stroke="#3c4453" d="M3.500 2.500h13v11h-13z"/><path stroke="#4b5261" d="M3 20.500h5M10 20.500h6M8.500 18v5M3 26.500h9M12.500 24v5"/><path class="fy" stroke="#3c4453" d="M14 27l6-6 7 9-3 3h-4z"/><path class="fw" d="M20 21l5 1 4-3 3 3-3 4 1 4-3-1z"/></svg><span>特性<br>匹配</span></button>
      <div class="stack">
        <span class="cmd"><svg class="i16"><use href="#wheel"/></svg></span>
        <span class="cmd"><svg class="i16"><use href="#lweight"/></svg></span>
        <span class="cmd"><svg class="i16"><use href="#ltype"/></svg></span>
      </div>
      <div class="prop-combos">
        <div class="combo"><span class="swatch"></span><select aria-label="颜色"><option>ByLayer</option></select><svg class="caret"><use href="#caret"/></svg></div>
        <div class="combo"><span class="sample"></span><select aria-label="线宽"><option>ByLayer</option></select><svg class="caret"><use href="#caret"/></svg></div>
        <div class="combo"><span class="sample"></span><select aria-label="线型"><option>ByLayer</option></select><svg class="caret"><use href="#caret"/></svg></div>
      </div>
    </div>
    <button class="panel-title">特性<svg class="caret"><use href="#caret"/></svg><svg class="launch pinned" viewBox="0 0 6 6"><path class="g" d="M0 0l5 5M5.500 1v4.500H1"/></svg></button>
  </div>

  <div class="panel">
    <div class="panel-body group">
      <button class="big w38"><svg class="i32" viewBox="0 0 32 32"><path class="w" d="M4 5.500H.5v27H4M18 32h3.500V17"/><path class="bs" d="M6.500 9.500h9v7h-9z"/><circle class="gs" cx="11" cy="25" r="5"/><path class="fy" d="M23 0l2 5 4-2-2 4 5 2-5 2 2 4-4-2-2 5-2-5-4 2 2-4-5-2 5-2-2-4 4 2z"/></svg><span>组</span></button>
      <div class="stack">
        <button class="cmd" aria-label="解除编组"><svg class="i16"><use href="#ungroup"/></svg></button>
        <button class="cmd" aria-label="组编辑"><svg class="i16"><use href="#grpedit"/></svg></button>
        <button class="cmd on" aria-label="启用组选择"><svg class="i16"><use href="#grpsel"/></svg></button>
      </div>
    </div>
    <button class="panel-title">组<svg class="caret"><use href="#caret"/></svg></button>
  </div>

  <div class="panel">
    <div class="panel-body utils">
      <button class="big w42"><svg class="i32" viewBox="0 0 32 32"><path class="fy" d="M2 14h28v7H2z"/><path stroke="#7a6b4a" d="M5.500 14v3M8.500 14v2M11.500 14v3M14.500 14v2M17.500 14v3M20.500 14v2M23.500 14v3M26.500 14v2"/></svg><span>测量</span><svg class="caret small"><use href="#caret"/></svg></button>
      <div class="stack">
        <button class="cmd" aria-label="快速选择"><svg class="i16"><use href="#qselect"/></svg></button>
        <button class="cmd" aria-label="选择类似对象"><svg class="i16"><use href="#selsim"/></svg></button>
        <button class="cmd" aria-label="快速计算器"><svg class="i16"><use href="#calc"/></svg></button>
      </div>
    </div>
    <button class="panel-title">实用工具<svg class="caret"><use href="#caret"/></svg></button>
  </div>

  <div class="panel">
    <div class="panel-body clip">
      <button class="big w42"><svg class="i32" viewBox="0 0 32 32"><path fill="#d9ae74" d="M3 4h22v8h-12v17H3z"/><path class="fw" d="M9 2h3V0h4v2h3v4H9z"/><path class="fg" stroke="#3c4453" d="M10.500 10.500h11v7h8v15h-19z"/><path class="fw" d="M23 10l6 6h-6z"/></svg><span>粘贴</span><svg class="caret small"><use href="#caret"/></svg></button>
      <div class="stack">
        <button class="cmd" aria-label="剪切"><svg class="i16"><use href="#cut"/></svg><svg class="caret small"><use href="#caret"/></svg></button>
        <button class="cmd" aria-label="复制"><svg class="i16"><use href="#copyclip"/></svg><svg class="caret small"><use href="#caret"/></svg></button>
      </div>
    </div>
    <div class="panel-title">剪贴板</div>
  </div>

  <div class="panel last">
    <div class="panel-body view">
      <button class="big w42"><svg class="i32" viewBox="0 0 32 32"><path class="fg" d="M0 5h14v10h18v14H0z"/></svg><span>基点</span><svg class="caret small"><use href="#caret"/></svg></button>
    </div>
    <button class="panel-title">视图<svg class="caret"><use href="#caret"/></svg><svg class="launch" viewBox="0 0 6 6"><path class="g" d="M0 0l5 5M5.500 1v4.500H1"/></svg></button>
  </div>

  <div class="floatbar">
    <span class="dots tall"></span>
    <button aria-label="显示视口对话框"><svg class="i16"><use href="#vp-dlg"/></svg></button>
    <button aria-label="单个视口"><svg class="i16"><use href="#vp-one"/></svg></button>
    <button aria-label="多边形视口"><svg class="i16"><use href="#vp-poly"/></svg></button>
    <button aria-label="将对象转换为视口"><svg class="i16"><use href="#vp-obj"/></svg></button>
    <button aria-label="剪裁现有视口"><svg class="i16"><use href="#vp-clip"/></svg></button>
    <div class="scale-box"><select aria-label="视口比例"><option>按图纸缩放</option></select><svg viewBox="0 0 8 5"><path fill="none" stroke="#a8a8a8" d="M0 0l4 4 4-4"/></svg></div>
    <button class="float-close" aria-label="关闭工具栏"><svg viewBox="0 0 8 8"><path class="w2" d="M1 1l6 6M7 1L1 7"/></svg></button>
  </div>
</section>

<nav class="file-tabs">
  <button class="menu-btn" aria-label="文件选项卡菜单"><svg class="bars"><use href="#bars"/></svg></button>
  <span class="slash"></span>
  <button class="start">开始</button>
  <button class="doc-tab">Drawing1*<svg class="tab-x" viewBox="0 0 8 8"><path d="M0 0l8 8M8 0L0 8"/></svg></button>
  <button class="add" aria-label="新图形"><svg class="plus"><use href="#plus"/></svg></button>
  <span class="slash"></span>
</nav>

<main class="workspace">
  <aside class="palette">
    <h2><span class="dots tall"></span>特性</h2>
    <div class="palette-body">
      <div class="picker">
        <div class="combo"><select aria-label="选择对象"><option>无选择</option></select><svg class="caret"><use href="#caret"/></svg></div>
        <button aria-label="切换 PICKADD"><svg class="i16"><use href="#addobj"/></svg></button>
        <button aria-label="选择对象"><svg class="i16"><use href="#selall"/></svg></button>
        <button aria-label="快速选择"><svg class="i16"><use href="#qselect"/></svg></button>
      </div>
      <section>
        <button class="sect">常规<svg class="caret"><use href="#caret"/></svg></button>
        <table>
          <tr><th>颜色</th><td><span class="swatch"></span>ByLayer</td></tr>
          <tr><th>图层</th><td>0</td></tr>
          <tr><th>线型</th><td><span class="sample"></span>ByLayer</td></tr>
          <tr><th>线型比例</th><td>1</td></tr>
          <tr><th>线宽</th><td><span class="sample"></span>ByLayer</td></tr>
          <tr><th>透明度</th><td>ByLayer</td></tr>
          <tr><th>厚度</th><td>0</td></tr>
        </table>
      </section>
      <section>
        <button class="sect">三维效果<svg class="caret"><use href="#caret"/></svg></button>
        <table>
          <tr><th>材质</th><td>ByLayer</td></tr>
        </table>
      </section>
      <section>
        <button class="sect">打印样式<svg class="caret"><use href="#caret"/></svg></button>
        <table>
          <tr><th>打印样式</th><td class="off">ByColor</td></tr>
          <tr><th>打印样式表</th><td>无</td></tr>
          <tr><th>打印表附着到</th><td class="off">模型</td></tr>
          <tr><th>打印表类型</th><td class="off">不可用</td></tr>
        </table>
      </section>
      <section>
        <button class="sect">视图<svg class="caret"><use href="#caret"/></svg></button>
        <table>
          <tr><th>圆心 X 坐标</th><td class="off">9474.7537</td></tr>
          <tr><th>圆心 Y 坐标</th><td class="off">4647.7504</td></tr>
          <tr><th>圆心 Z 坐标</th><td class="off">0</td></tr>
          <tr><th>高度</th><td class="off">4498.3993</td></tr>
          <tr><th>宽度</th><td class="off">11500.9836</td></tr>
        </table>
      </section>
      <section>
        <button class="sect">其他<svg class="caret"><use href="#caret"/></svg></button>
        <table>
          <tr><th>注释比例</th><td>1:1</td></tr>
          <tr><th>打开 UCS 图标</th><td>是</td></tr>
          <tr><th>在原点显示 UCS 图标</th><td>是</td></tr>
          <tr><th>每个视口都显示 UCS</th><td>是</td></tr>
          <tr><th>UCS 名称</th><td></td></tr>
          <tr><th>视觉样式</th><td>二维线框</td></tr>
        </table>
      </section>
    </div>
  </aside>

  <div class="stage">
    <div class="drawing-row">
      <div class="toolbar">
        <span class="dots wide"></span>
        <button aria-label="直线"><svg class="i16"><use href="#line"/></svg></button>
        <button aria-label="构造线"><svg class="i16"><use href="#xline"/></svg></button>
        <button aria-label="多段线"><svg class="i16"><use href="#pline"/></svg></button>
        <button aria-label="多边形"><svg class="i16"><use href="#polygon"/></svg></button>
        <button aria-label="矩形"><svg class="i16"><use href="#rect"/></svg></button>
        <button aria-label="圆弧"><svg class="i16"><use href="#arc"/></svg></button>
        <button aria-label="圆"><svg class="i16"><use href="#circle"/></svg></button>
        <button aria-label="修订云线"><svg class="i16"><use href="#cloud"/></svg></button>
        <button aria-label="样条曲线"><svg class="i16"><use href="#spline"/></svg></button>
        <button aria-label="椭圆"><svg class="i16"><use href="#ellipse"/></svg></button>
        <button aria-label="椭圆弧"><svg class="i16"><use href="#earc"/></svg></button>
        <button aria-label="插入块"><svg class="i16"><use href="#insert"/></svg></button>
        <button aria-label="创建块"><svg class="i16"><use href="#mkblock"/></svg></button>
        <button aria-label="点"><svg class="i16"><use href="#points"/></svg></button>
        <button aria-label="图案填充"><svg class="i16"><use href="#hatch"/></svg></button>
        <button aria-label="渐变色"><svg class="i16"><use href="#gradient"/></svg></button>
        <button aria-label="面域"><svg class="i16"><use href="#region"/></svg></button>
        <button aria-label="表格"><svg class="i16"><use href="#table"/></svg></button>
        <button aria-label="多行文字"><svg class="i16" viewBox="0 0 16 16"><path fill="none" stroke="#dcdcdc" stroke-width="2" d="M3 15L8 2l5 13M5 11h6"/></svg></button>
        <button aria-label="添加选定对象"><svg class="i16"><use href="#addsel"/></svg></button>
      </div>

      <div class="canvas">
        <svg class="grid" aria-hidden="true">
          <defs>
            <pattern id="gridlines" x="3" y="85" width="821" height="821" patternUnits="userSpaceOnUse">
              <path class="minor" d="M33.500 0v821M66.500 0v821M99.500 0v821M131.500 0v821M197.500 0v821M230.500 0v821M263.500 0v821M296.500 0v821M361.500 0v821M394.500 0v821M427.500 0v821M460.500 0v821M525.500 0v821M558.500 0v821M591.500 0v821M624.500 0v821M690.500 0v821M722.500 0v821M755.500 0v821M788.500 0v821M0 33.500h821M0 66.500h821M0 99.500h821M0 131.500h821M0 197.500h821M0 230.500h821M0 263.500h821M0 296.500h821M0 361.500h821M0 394.500h821M0 427.500h821M0 460.500h821M0 525.500h821M0 558.500h821M0 591.500h821M0 624.500h821M0 690.500h821M0 722.500h821M0 755.500h821M0 788.500h821"/>
              <path class="major" d="M.5 0v821M164.500 0v821M328.500 0v821M493.500 0v821M657.500 0v821M0 .5h821M0 164.500h821M0 328.500h821M0 493.500h821M0 657.500h821"/>
            </pattern>
          </defs>
          <rect width="100%" height="100%" fill="url(#gridlines)"/>
          <path class="w" d="M0 73.500h13M20 73.500h45M16.500 25v45M16.500 77v45M13.500 70.500h6v6h-6z"/>
        </svg>
        <svg class="ucs" viewBox="0 0 76 76" aria-label="UCS 图标"><path class="w" d="M5.500 66.500V18M5.500 68.500H56M1.500 63.500h9v9h-9zM7 1l6 6 6-6M13.500 7v7M60 53l13 13M73 53L60 66"/></svg>
        <div class="viewcube">
          <span class="north">北</span><span class="west">西</span><button class="face">上</button><span class="east">东</span><span class="south">南</span>
        </div>
        <button class="wcs">WCS<svg viewBox="0 0 10 6"><path fill="none" stroke="#b8b8c0" d="M1 .5h8L5 5z"/></svg></button>
        <div class="navbar">
          <svg viewBox="0 0 32 212" fill="none" stroke="#2a2a2a" stroke-width="1.200">
            <circle cx="26" cy="5" r="3.500" fill="#2a2a2a"/><path stroke="#555" d="M24 3l4 4M28 3l-4 4"/>
            <path d="M6 22c4-4 10-3 20-3v10c0 8-4 11-10 11S5 36 5 30c0-3 0-6 1-8z"/><circle cx="16" cy="30" r="8"/><circle cx="16" cy="30" r="5"/>
            <path fill="#2a2a2a" stroke="none" d="M13 49h6l-3 3zM13 119h6l-3 3zM13 157h6l-3 3z"/>
            <path stroke="#555" d="M3 56.500h26M3 164.500h26"/>
            <path d="M11 80c-2-3-5-5-7-6 1-3 4 0 6 2L7 65c2-2 3 1 5 7l-1-9c2-2 3 0 4 8V62c2-1 3 0 3 9l2-7c2-1 3 1 1 9l3-5c2 0 2 2 0 5l-3 8-3 3h-5z"/>
            <path d="M5 91l15 14M20 90L5 105M4 94v-4h4M16 90h5v4M4 102v4h4"/><circle cx="21" cy="104" r="5"/><path stroke-width="3" d="M24 108l4 4"/>
            <path d="M13 148v-15h-3l6-6 5 6h-3v15zM10 136c-9 3-5 8 6 9 10 0 14-5 5-8M8 147l4-3-4-3z"/>
            <path d="M4.500 169.500h6v6h-6zM12.500 169.500h6v6h-6zM20.500 169.500h6v6h-6zM4.500 178.500h16v13h-16z"/><path fill="#2a2a2a" d="M9 181l6 4-6 4z"/>
            <circle cx="26" cy="206" r="3.500" fill="#2a2a2a"/><path stroke="#555" d="M24 206h4"/>
          </svg>
        </div>
      </div>

      <div class="toolbar right">
        <span class="dots wide"></span>
        <button aria-label="删除"><svg class="i16"><use href="#erase"/></svg></button>
        <button aria-label="复制"><svg class="i16"><use href="#copy"/></svg></button>
        <button aria-label="镜像"><svg class="i16"><use href="#mirror"/></svg></button>
        <button aria-label="偏移"><svg class="i16"><use href="#offset"/></svg></button>
        <button aria-label="阵列"><svg class="i16"><use href="#array"/></svg></button>
        <button aria-label="移动"><svg class="i16"><use href="#move"/></svg></button>
        <button aria-label="旋转"><svg class="i16"><use href="#rotate"/></svg></button>
        <button aria-label="缩放"><svg class="i16"><use href="#scale"/></svg></button>
        <button aria-label="拉伸"><svg class="i16"><use href="#stretch"/></svg></button>
        <button aria-label="修剪"><svg class="i16"><use href="#trim"/></svg></button>
        <button aria-label="延伸"><svg class="i16"><use href="#extend"/></svg></button>
        <button aria-label="打断于点"><svg class="i16"><use href="#breakp"/></svg></button>
        <button aria-label="打断"><svg class="i16"><use href="#break"/></svg></button>
        <button aria-label="合并"><svg class="i16"><use href="#join"/></svg></button>
        <button aria-label="倒角"><svg class="i16"><use href="#chamfer"/></svg></button>
        <button aria-label="圆角"><svg class="i16"><use href="#fillet"/></svg></button>
        <button aria-label="光顺曲线"><svg class="i16"><use href="#blend"/></svg></button>
        <button aria-label="分解"><svg class="i16"><use href="#box"/></svg></button>
      </div>
    </div>

    <section class="command">
      <div class="command-side">
        <span class="dots bold"></span>
        <button class="x" aria-label="关闭命令行"><svg viewBox="0 0 10 10"><path class="g2" d="M1 1l8 8M9 1L1 9"/></svg></button>
        <button class="wrench" aria-label="自定义"><svg class="i16" viewBox="0 0 16 16"><path stroke="#dcdcdc" stroke-width="3" d="M1 15l8-8"/><path class="fg" d="M8 4l4-4 1 1-2 2 1 2 2 1 2-2v2l-4 4H9L7 8z"/></svg></button>
      </div>
      <div class="command-main">
        <pre class="log">命令:   &lt;切换到: 布局2&gt;
正在重生成布局。
正在重生成布局。
正在重生成模型。
命令: *取消*
命令: *取消*
命令:   &lt;切换到: 模型&gt;
正在重生成模型。
命令: 正在重生成模型。</pre>
        <div class="prompt">
          <svg viewBox="0 0 16 13"><path fill="#fff" stroke="#555" d="M.5.500h15v12H.5z"/><path fill="#555" d="M0 0h16v3H0z"/><path fill="none" stroke="#555" d="M3 5l2 2-2 2M7 9.500h4"/></svg>
          <svg class="prompt-caret" viewBox="0 0 8 4"><path fill="#555" d="M0 0h8L4 4z"/></svg>
          <input type="text" placeholder="键入命令" aria-label="命令行">
        </div>
      </div>
    </section>
  </div>
</main>

<footer class="statusbar">
  <nav class="layout-tabs">
    <button class="menu-btn" aria-label="布局菜单"><svg class="bars"><use href="#bars"/></svg></button>
    <button class="model-tab">模型</button>
    <button class="layout">布局1</button><span class="slash"></span>
    <button class="layout">布局2</button><span class="slash"></span>
    <button class="add" aria-label="新建布局"><svg class="plus"><use href="#plus"/></svg></button><span class="slash"></span>
  </nav>
  <div class="status-tools">
    <button class="st s27">模型</button>
    <button class="st s24 lit" aria-label="栅格"><svg class="i16"><use href="#s-grid"/></svg></button>
    <button class="st s40" aria-label="捕捉模式"><svg class="i16"><use href="#s-snap"/></svg><svg class="caret"><use href="#caret"/></svg></button>
    <div class="st s104">
      <button aria-label="正交"><svg class="i16"><use href="#s-ortho"/></svg></button>
      <button aria-label="极轴追踪"><svg class="i16"><use href="#s-polar"/></svg><svg class="caret"><use href="#caret"/></svg></button>
      <button aria-label="等轴测草图"><svg class="i16"><use href="#s-iso"/></svg><svg class="caret"><use href="#caret"/></svg></button>
    </div>
    <button class="st s22 lit" aria-label="对象捕捉追踪"><svg class="i16"><use href="#s-track"/></svg></button>
    <div class="st s39"><button class="lit s22" aria-label="对象捕捉"><svg class="i16"><use href="#s-osnap"/></svg></button><svg class="caret"><use href="#caret"/></svg></div>
    <button class="st s24" aria-label="线宽"><svg class="i16"><use href="#s-lw"/></svg></button>
    <button class="st s22 lit spaced" aria-label="注释可见性"><svg class="i16"><use href="#s-annv"/></svg></button>
    <div class="st s82">
      <button aria-label="自动缩放"><svg class="i16"><use href="#s-anna"/></svg></button>
      <button class="ratio"><svg class="i16"><use href="#s-ann"/></svg>1:1<svg class="caret"><use href="#caret"/></svg></button>
    </div>
    <button class="st s40" aria-label="切换工作空间"><svg class="i16"><use href="#s-gear"/></svg><svg class="caret"><use href="#caret"/></svg></button>
    <button class="st s24" aria-label="注释监视器"><svg class="plus"><use href="#plus"/></svg></button>
    <button class="st s24" aria-label="隔离对象"><svg class="i16"><use href="#s-unit"/></svg></button>
    <button class="st s30" aria-label="图形性能"><svg class="i16"><use href="#s-warn"/></svg></button>
    <button class="st s24" aria-label="全屏显示"><svg class="i16"><use href="#s-clean"/></svg></button>
    <button class="st s24" aria-label="自定义"><svg class="bars"><use href="#bars"/></svg></button>
  </div>
  <span class="watermark">CSDN @麒麟233</span>
</footer>

</body>
</html>
```

FILE: styles.css
```css
:root {
  --dark: #222831;
  --panel: #3c4453;
  --head: #2f3440;
  --field: #4f5b6e;
  --icon: #dcdcdc;
  --blue: #6fc0ff;
  --yellow: #ffd57a;
  --lit: #5e8dc0;
  --grip-bg: var(--panel);
}

* { box-sizing: border-box; }

body {
  margin: 0;
  min-height: 100vh;
  display: flex;
  flex-direction: column;
  background: var(--dark);
  color: #f0f0f0;
  font: 12px/16px "Noto Sans", "Noto Sans CJK SC", sans-serif;
  overflow: hidden;
}

button, input, select {
  font: inherit;
  color: inherit;
  background: none;
  border: 0;
  padding: 0;
  margin: 0;
  border-radius: 0;
}
button { white-space: nowrap; display: flex; align-items: center; justify-content: center; }
select { appearance: none; flex: 1; min-width: 0; height: 100%; outline: 0; }
svg { display: block; flex: none; }
.sprite { position: absolute; width: 0; height: 0; }

/* icon paint */
.g, .g2, .b, .w, .w2 { fill: none; }
.g { stroke: var(--icon); }
.g2 { stroke: var(--icon); stroke-width: 2; }
.b { stroke: var(--blue); }
.w { stroke: #fff; }
.w2 { stroke: #fff; stroke-width: 2; }
.gs { fill: #727884; stroke: var(--icon); fill-opacity: .8; }
.bs { fill: #4d6a88; stroke: var(--blue); }
.fg { fill: var(--icon); }
.fw { fill: #fff; }
.fb { fill: #7cc5ff; }
.fy { fill: var(--yellow); }
.fr { fill: #f05a5a; }

.i12 { width: 12px; height: 12px; }
.i16 { width: 16px; height: 16px; }
.i32 { width: 32px; height: 32px; overflow: visible; }
.caret { width: 8px; height: 4px; }
.caret.small { width: 6px; height: 3px; }
.dim { opacity: .6; }
.bars { width: 16px; height: 14px; }
.plus { width: 14px; height: 14px; }
.swatch { width: 14px; height: 14px; background: #fff; border: 1px solid #d4d4d4; flex: none; }
.sample { height: 1px; width: 65px; background: #fff; flex: none; }

/* dotted grips: column stripes cut by rows of the background colour */
.dots {
  flex: none;
  background:
    repeating-linear-gradient(180deg, transparent 0 1px, var(--grip-bg) 1px 2px),
    repeating-linear-gradient(90deg, #c8c8c8 0 1px, var(--grip-bg) 1px 2px);
}
.dots.tall { width: 3px; height: 11px; }
.dots.wide { width: 13px; height: 3px; }
.dots.bold {
  width: 17px;
  height: 5px;
  background:
    repeating-linear-gradient(180deg, transparent 0 2px, var(--grip-bg) 2px 3px),
    repeating-linear-gradient(90deg, #dcdcdc 0 2px, var(--grip-bg) 2px 3px);
}

/* title bar */
.titlebar { height: 28px; display: flex; align-items: center; }
.quick { display: flex; align-items: center; padding-left: 15px; }
.logo { width: 24px; height: 22px; background: #86132f; justify-content: flex-start; align-items: flex-start; }
.logo-face { width: 22px; height: 19px; background: #e51050; border-left: 4px solid #f0527d; color: #fff; font-weight: 700; font-size: 14px; line-height: 18px; text-align: center; }
.gap-l { margin: 0 11px 0 3px; }
.quick-icons { display: flex; gap: 8px; margin-right: 7px; }
.redo { margin: 0 7px; }
.custom { margin: 0 7px; }
.custom svg { width: 8px; height: 7px; }
.share { gap: 5px; color: #8ccbff; }
.title { flex: 1; margin: 0; display: flex; justify-content: center; gap: 16px; font: inherit; color: #e8e8e8; }
.account { display: flex; align-items: center; justify-content: flex-end; padding-right: 14px; }
.play { width: 4px; height: 8px; margin-right: 6px; }
.search { width: 178px; height: 20px; background: #48505f; padding: 0 3px; margin-right: 6px; font-style: italic; }
.search::placeholder { color: #aeb3bb; opacity: 1; }
.login { gap: 5px; margin-left: 7px; color: #fff; }
.login-caret { margin: 0 11px 0 61px; }
.store2 { gap: 4px; margin: 0 10px 0 7px; }
.vsep { width: 1px; height: 18px; background: #454d5b; margin-right: 9px; }
.helpbtn { gap: 7px; margin-right: 82px; }
.winctl { display: flex; gap: 34px; }

/* menus */
.menubar { height: 20px; display: flex; justify-content: space-between; align-items: center; padding: 2px 7px 0 14px; color: #b4b7bd; }
.menus { display: flex; gap: 25px; }
.docctl { display: flex; gap: 20px; }

.plugin-row { height: 33px; background: var(--panel); padding-top: 1px; display: flex; }
.plugin { display: flex; align-items: center; height: 32px; border: 2px solid #fff; background: var(--dark); padding: 0 10px 0 3px; box-shadow: inset 0 -1px #8b909a; }
.bar-grip { width: 7px; height: 26px; border: solid #c9ccd2; border-width: 0 2px; background: var(--dark); }
.plugin-logo { width: 16px; height: 16px; margin-right: 10px; }
.plugin-menus { display: flex; gap: 11px; color: #fff; }

/* ribbon */
.ribbon-tabs { height: 24px; display: flex; align-items: flex-end; padding-left: 4px; color: #b4b7bd; }
.ribbon-tabs button { height: 20px; padding: 2px 10px 0; }
.ribbon-tabs .active { background: var(--panel); color: #fff; padding: 2px 9px 0; margin-right: 1px; }
.ribbon-tabs .collapse { gap: 4px; padding-left: 21px; }
.collapse svg:first-child { width: 15px; height: 8px; }

.ribbon { display: flex; height: 99px; background: var(--panel); position: relative; border-left: 1px solid var(--dark); }
.panel { display: flex; flex-direction: column; border-right: 1px solid var(--dark); flex: none; }
.panel.last { border-right: 0; }
.panel-body { display: flex; height: 77px; padding-top: 5px; }
.panel-title { height: 22px; padding-top: 2px; display: flex; align-items: center; justify-content: center; gap: 7px; position: relative; color: #e8e8e8; }
.launch { width: 6px; height: 6px; }
.launch.pinned { position: absolute; right: 4px; top: 9px; }
.big { flex-direction: column; justify-content: flex-start; padding-top: 2px; flex: none; height: 72px; }
.big span { margin-top: 4px; line-height: 17px; }
.big .caret { margin-top: 2px; }
.w38 { width: 38px; }
.w40 { width: 40px; }
.w42 { width: 42px; }
.w46 { width: 46px; }
.stack { display: flex; flex-direction: column; }
.cmd { height: 24px; gap: 5px; display: flex; justify-content: flex-start; align-items: center; }
.cmd .caret { margin-left: 2px; }
.cmd .far { margin-left: 6px; }

.draw { padding-left: 3px; width: 210px; }
.draw-small { padding-left: 5px; }
.modify { display: grid; grid-template-columns: 59px 59px 75px 16px; grid-auto-rows: 24px; padding-left: 7px; width: 226px; }
.annotate { padding-left: 4px; width: 155px; }
.annotate .stack { padding-left: 3px; }
.layers { padding-left: 1px; width: 251px; }
.layer-tools { flex: 1; padding-right: 2px; }
.block { padding-left: 1px; width: 133px; }
.block .stack { padding-left: 2px; }
.props { padding-left: 2px; width: 243px; }
.props .stack { padding: 0 2px 0 3px; }
.prop-combos { flex: 1; padding: 1px 1px 0 0; }
.group { padding-left: 2px; width: 67px; }
.group .cmd { width: 24px; justify-content: center; }
.group .on { height: 22px; margin-top: 1px; border: 1px solid var(--blue); background: #44617f; }
.utils { padding-left: 4px; width: 75px; }
.utils .stack { padding-left: 7px; }
.clip { padding-left: 4px; width: 86px; }
.clip .stack { padding-left: 7px; }
.clip .cmd { gap: 2px; }
.view { padding-left: 9px; width: 62px; }

.combo { display: flex; align-items: center; background: var(--field); border: 1px solid #2b303b; height: 22px; padding: 0 4px 0 6px; color: #fff; }
.layer-combo { gap: 4px; padding-left: 3px; padding-right: 2px; margin: 1px 0; }
.layer-combo select { margin-left: 1px; }
.layer-row { display: flex; gap: 8px; height: 24px; padding-left: 5px; }
.prop-combos .combo { margin-bottom: 2px; padding-right: 3px; }
.prop-combos .swatch { width: 16px; height: 16px; margin-right: 5px; }
.prop-combos .sample { margin-right: 2px; }

.floatbar { position: absolute; right: 81px; top: 42px; height: 25px; display: flex; align-items: center; gap: 7px; padding: 0 2px 0 3px; border: 1px solid var(--dark); }
.floatbar .dots { margin-right: -2px; }
.scale-box { display: flex; align-items: center; width: 99px; height: 22px; background: #fff; color: #6e6e6e; padding: 0 4px 0 3px; border-left: 1px solid #777d88; }
.scale-box select { height: 16px; background: #eeeeee; margin-right: 7px; padding-left: 1px; }
.scale-box svg { width: 8px; height: 5px; }
.float-close { align-self: flex-start; margin: 2px 0 0 -5px; }
.float-close svg { width: 7px; height: 7px; }

/* document tabs */
.file-tabs { height: 27px; display: flex; align-items: center; padding: 3px 0 0 16px; }
.menu-btn { margin-right: 10px; }
.slash { width: 8px; height: 16px; flex: none; background: linear-gradient(to bottom right, transparent 0 45%, #5a6270 47% 53%, transparent 55%); }
.start { margin: 0 8px; }
.doc-tab { height: 24px; width: 110px; background: var(--panel); clip-path: polygon(9px 0, 100% 0, 101px 100%, 0 100%); font-weight: 700; gap: 9px; padding-left: 4px; }
.tab-x { width: 8px; height: 8px; stroke: #b4b7bd; stroke-width: 2; }
.file-tabs .add { margin: 0 10px 0 9px; }

/* workspace */
.workspace { flex: 1; display: flex; gap: 4px; background: var(--panel); padding: 4px 0; min-height: 0; }
.palette { width: 343px; flex: none; display: flex; flex-direction: column; padding-top: 2px; }
.palette h2 { --grip-bg: var(--head); margin: 0; height: 22px; display: flex; align-items: center; gap: 6px; padding-left: 6px; background: var(--head); font: inherit; border-radius: 4px 4px 0 0; color: #e8e8e8; }
.palette-body { flex: 1; padding: 12px 11px 0 17px; border-bottom: 1px solid #2b303b; border-radius: 0 0 4px 4px; margin-bottom: 2px; }
.picker { display: flex; align-items: center; gap: 8px; margin-bottom: 4px; }
.picker .combo { width: 243px; height: 23px; padding: 0 3px; }
.sect { width: 315px; height: 22px; background: var(--head); justify-content: space-between; padding: 0 9px 0 7px; font-weight: 700; color: #fff; }
.palette-body section { margin-bottom: 3px; }
.palette table { width: 298px; margin-left: 17px; border-collapse: separate; border-spacing: 0; table-layout: fixed; border-left: 1px solid #2f3541; }
.palette th, .palette td { height: 21px; font-weight: 400; text-align: left; line-height: 16px; border: solid #2f3541; border-width: 0 1px 1px 0; white-space: nowrap; }
.palette th { width: 137px; padding: 0 0 4px 6px; color: #d0d3d8; }
.palette td { padding: 2px 0 0 3px; color: #fff; }
.palette td.off { color: #8d939d; }
.palette td .swatch { display: inline-block; vertical-align: -2px; margin-right: 6px; }
.palette td .sample { display: inline-block; vertical-align: 4px; margin-right: 5px; }

.stage { flex: 1; min-width: 0; display: flex; flex-direction: column; gap: 4px; }
.drawing-row { flex: 1; display: flex; gap: 4px; min-height: 0; align-items: flex-start; }
.toolbar { width: 25px; flex: none; border: 1px solid #232933; display: flex; flex-direction: column; align-items: center; padding: 3px 1px 0 0; }
.toolbar .dots { margin-bottom: 2px; }
.toolbar button { height: 22px; }
.toolbar.right { border-right: 0; padding-right: 2px; }

.canvas { flex: 1; align-self: stretch; position: relative; background: #000; overflow: hidden; }
.grid { width: 100%; height: 100%; position: absolute; }
.minor { stroke: #141419; }
.major { stroke: #23232f; }
.ucs { position: absolute; left: 10px; bottom: 8px; width: 76px; height: 76px; }

.viewcube { position: absolute; right: 20px; top: 19px; width: 100px; height: 100px; border: 10px solid #282828; border-radius: 50%; display: flex; align-items: center; justify-content: center; color: #a4a4a4; font-size: 16px; }
.viewcube span { position: absolute; }
.north { top: -14px; }
.south { bottom: -14px; }
.west { left: -15px; }
.east { right: -15px; }
.face { width: 44px; height: 44px; background: #a9a9a9; border: 1px solid #bdbdbd; color: #444; font-size: 24px; }
.wcs { position: absolute; right: 46px; top: 141px; width: 48px; height: 18px; border-radius: 4px; background: #8a8a93; border: 1px solid #a0a0a8; color: #3a3a40; font: 11px/16px "Liberation Sans", sans-serif; gap: 5px; }
.wcs svg { width: 9px; height: 6px; }
.navbar { position: absolute; right: 4px; top: 184px; width: 32px; height: 212px; background: #474747; border-radius: 4px; border: 1px solid #555; }
.navbar svg { width: 32px; height: 212px; margin: -1px; }

/* command line */
.command { --grip-bg: var(--head); display: flex; background: var(--head); flex: none; }
.command-side { width: 25px; display: flex; flex-direction: column; align-items: center; padding: 4px 1px 0 0; }
.command-side .x { margin-top: 8px; }
.command-side .x svg { width: 10px; height: 10px; }
.command-side .wrench { margin-top: 11px; }
.command-main { flex: 1; min-width: 0; border: 1px solid var(--dark); border-right: 0; }
.log { margin: 0; height: 145px; background: #c8c8c8; color: #000; padding: 7px 1px 0; font: 13px/15px "Noto Sans Mono CJK SC", "Liberation Mono", "Noto Sans CJK SC", monospace; }
.prompt { height: 21px; background: #fff; border-top: 1px solid var(--dark); display: flex; align-items: center; padding-left: 3px; }
.prompt svg { width: 16px; height: 13px; }
.prompt .prompt-caret { width: 7px; height: 4px; margin: 0 7px 0 3px; }
.prompt input { flex: 1; font-style: italic; font-size: 13px; color: #000; outline: 0; height: 20px; }
.prompt input::placeholder { color: #6e6e6e; opacity: 1; }

/* status bar */
.statusbar { height: 28px; display: flex; justify-content: space-between; align-items: flex-start; position: relative; }
.layout-tabs { display: flex; align-items: center; padding-left: 16px; height: 24px; }
.model-tab { height: 24px; width: 58px; background: var(--panel); clip-path: polygon(10px 0, 100% 0, 48px 100%, 0 100%); font-weight: 700; margin-right: 7px; }
.layout-tabs .menu-btn { margin-right: 9px; }
.layout { margin-right: 8px; }
.slash + .layout { margin-left: 8px; }
.layout-tabs .add { margin: 0 10px; }
.status-tools { display: flex; gap: 2px; padding-top: 2px; }
.st { height: 24px; background: var(--panel); display: flex; align-items: center; justify-content: center; gap: 9px; flex: none; }
.st button { gap: 9px; height: 24px; }
.s22 { width: 22px; }
.s24 { width: 24px; }
.s27 { width: 27px; }
.s30 { width: 30px; }
.s39 { width: 39px; justify-content: flex-start; gap: 6px; }
.s40 { width: 40px; }
.s82 { width: 82px; }
.s82.st { gap: 8px; }
.s82 .ratio { gap: 5px; color: #fff; }
.s104 { width: 104px; }
.s104.st { gap: 7px; }
.lit { background: var(--lit); }
.spaced { margin-left: 2px; }
.watermark { position: absolute; right: 16px; top: 5px; font: 15px/20px "Liberation Sans", "Noto Sans CJK SC", sans-serif; color: rgba(205, 205, 205, .75); text-shadow: 1px 1px 1px #000; pointer-events: none; }
```
